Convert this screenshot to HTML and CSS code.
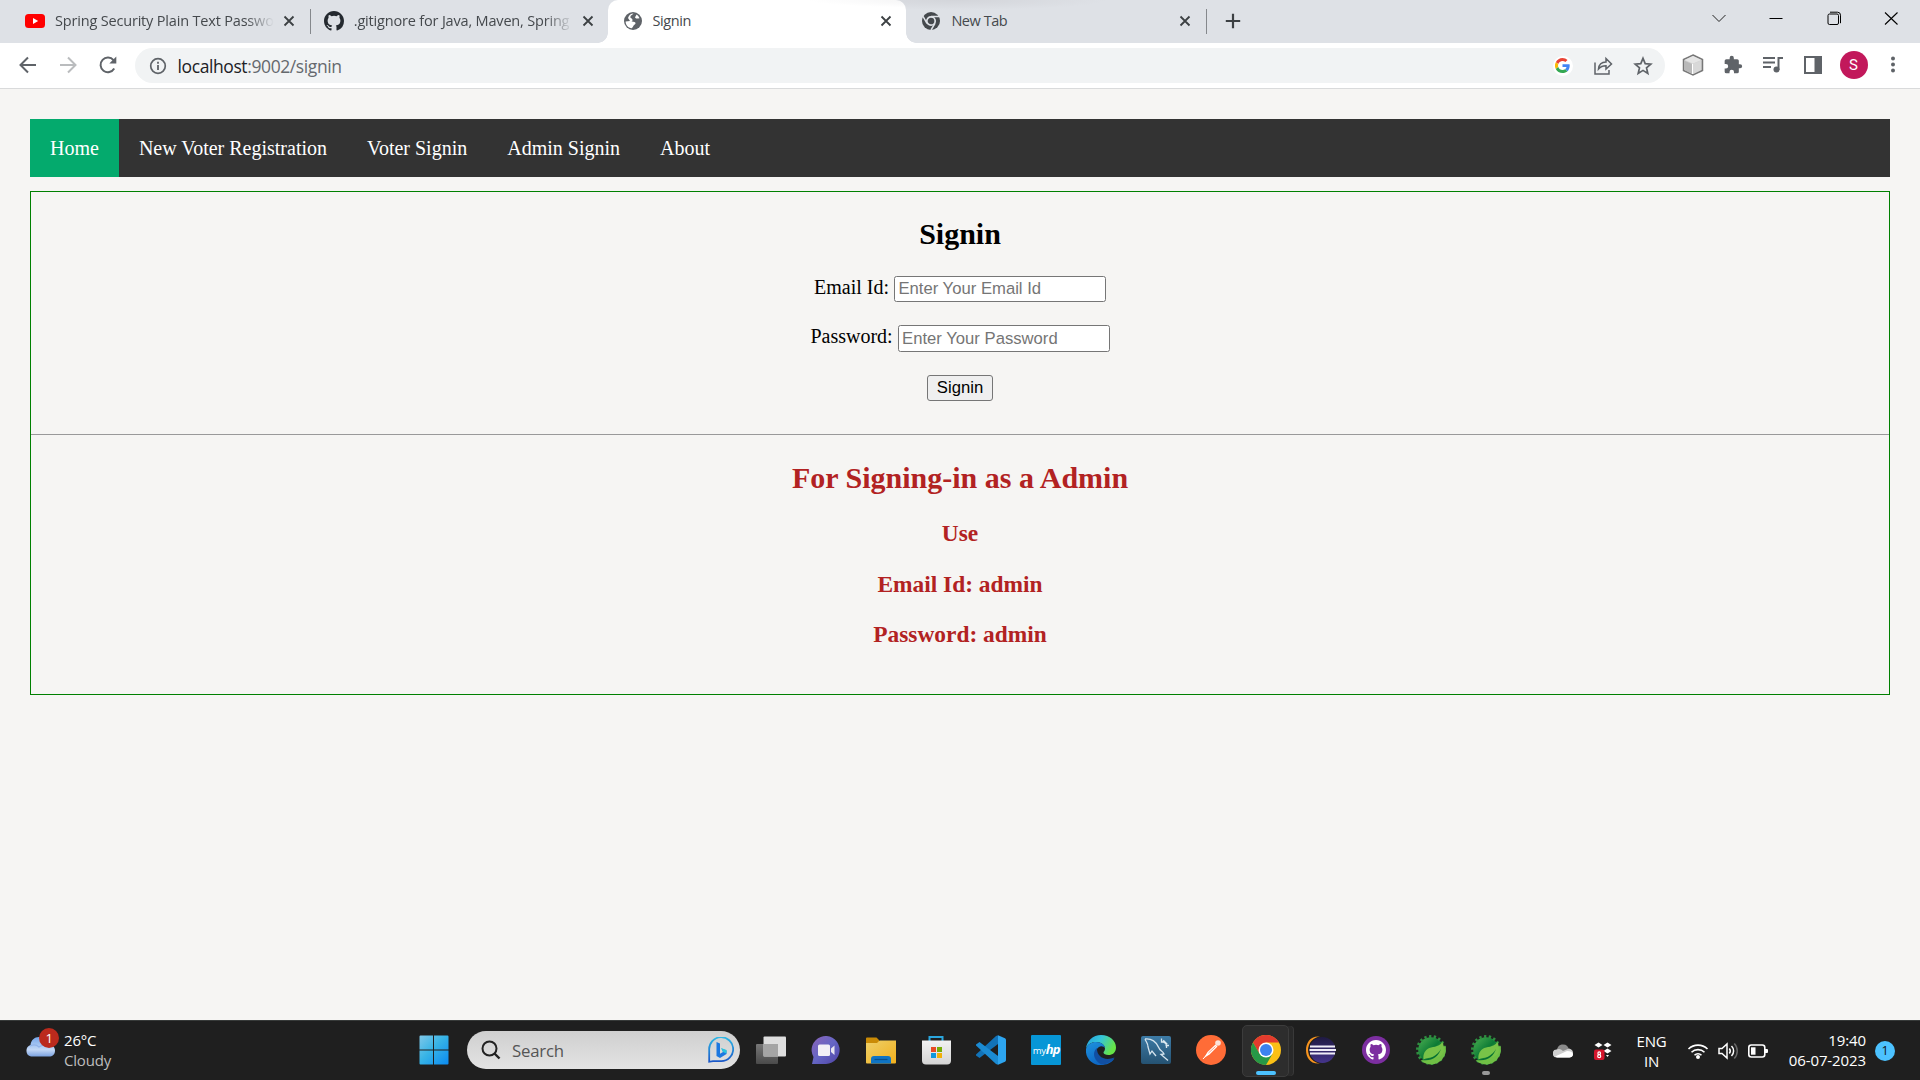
FILE: index.html
```html
<!DOCTYPE html>
<html lang="en">
<head>
<meta charset="utf-8">
<title>Signin</title>
<link rel="stylesheet" href="styles.css">
</head>
<body>
<svg class="defs" width="0" height="0" aria-hidden="true">
  <defs>
    <symbol id="close" viewBox="0 0 12 12"><path d="M1.5 1.5l9 9M10.5 1.5l-9 9" stroke="#3c4043" stroke-width="1.8" fill="none"/></symbol>
    <symbol id="octocat" viewBox="0 0 16 16"><path d="M8 0C3.58 0 0 3.58 0 8c0 3.54 2.29 6.53 5.47 7.59.4.07.55-.17.55-.38 0-.19-.01-.82-.01-1.49-2.01.37-2.53-.49-2.69-.94-.09-.23-.48-.94-.82-1.13-.28-.15-.68-.52-.01-.53.63-.01 1.08.58 1.23.82.72 1.21 1.87.87 2.33.66.07-.52.28-.87.51-1.07-1.78-.2-3.64-.89-3.64-3.95 0-.87.31-1.59.82-2.15-.08-.2-.36-1.02.08-2.12 0 0 .67-.21 2.2.82a7.6 7.6 0 0 1 4 0c1.53-1.04 2.2-.82 2.2-.82.44 1.1.16 1.92.08 2.12.51.56.82 1.27.82 2.15 0 3.07-1.87 3.75-3.65 3.95.29.25.54.73.54 1.48 0 1.07-.01 1.93-.01 2.2 0 .21.15.46.55.38A8.01 8.01 0 0 0 16 8c0-4.42-3.58-8-8-8z"/></symbol>
    <linearGradient id="gSpring" x1="0" y1="0" x2="1" y2="1"><stop offset="0" stop-color="#4db052"/><stop offset=".5" stop-color="#0c7a35"/><stop offset="1" stop-color="#5fb346"/></linearGradient>
    <symbol id="spring" viewBox="0 0 30 30">
      <circle cx="15" cy="15" r="12.8" fill="url(#gSpring)"/>
      <circle cx="15" cy="15" r="13.5" fill="none" stroke="#2f8f40" stroke-width="3" stroke-dasharray="2.3 2.41"/>
      <path d="M29.500 11a15 15 0 0 1-25 14.200C15 25.500 24 20 26.500 12z" fill="#70bf45"/>
      <path d="M26.500 7c3 8 2 15-8 15.500-5 0-8 .5-11 2-.5-4 .5-8 4-10.500C16 11 22 13 26.500 7z" fill="#78c348"/>
      <path d="M6 25c8-1 15-4 19-11-3 8-9 12.500-19 11z" fill="#067033"/>
    </symbol>
    <linearGradient id="gWin" x1="0" y1="0" x2="1" y2="1"><stop offset="0" stop-color="#80c8e8"/><stop offset=".45" stop-color="#38b4e6"/><stop offset="1" stop-color="#0a8af0"/></linearGradient>
    <linearGradient id="gCloud" x1="0" y1="0" x2="0" y2="1"><stop offset="0" stop-color="#76a7ea"/><stop offset=".65" stop-color="#c3d8f6"/><stop offset="1" stop-color="#7ba2e0"/></linearGradient>
    <linearGradient id="gChat" x1="0" y1="0" x2="1" y2="1"><stop offset="0" stop-color="#8b63b8"/><stop offset=".5" stop-color="#6566c4"/><stop offset="1" stop-color="#4f42a4"/></linearGradient>
    <linearGradient id="gFold" x1="0" y1="0" x2="1" y2="1"><stop offset="0" stop-color="#eed06a"/><stop offset="1" stop-color="#f2b01c"/></linearGradient>
    <linearGradient id="gBing" x1="0" y1="0" x2="0" y2="1"><stop offset="0" stop-color="#2bb8e6"/><stop offset="1" stop-color="#1a57c8"/></linearGradient>
    <linearGradient id="gEdge" x1="0" y1="0" x2="1" y2=".4"><stop offset="0" stop-color="#239fe0"/><stop offset=".5" stop-color="#36c6d8"/><stop offset="1" stop-color="#66e448"/></linearGradient>
    <linearGradient id="gEdgeB" x1="0" y1="0" x2=".6" y2="1"><stop offset="0" stop-color="#1e92de"/><stop offset="1" stop-color="#0c62c0"/></linearGradient>
    <linearGradient id="gSql" x1="0" y1="0" x2="0" y2="1"><stop offset="0" stop-color="#3d7ba6"/><stop offset="1" stop-color="#255272"/></linearGradient>
    <linearGradient id="gEcl" x1="0" y1="0" x2="0" y2="1"><stop offset="0" stop-color="#1f1a42"/><stop offset="1" stop-color="#45358c"/></linearGradient>
    <linearGradient id="gStore" x1="0" y1="0" x2="0" y2="1"><stop offset="0" stop-color="#f2f2f2"/><stop offset="1" stop-color="#d4d4d4"/></linearGradient>
    <linearGradient id="gBack" x1="0" y1="0" x2="0" y2="1"><stop offset="0" stop-color="#777"/><stop offset="1" stop-color="#4a4a4a"/></linearGradient>
  </defs>
</svg>

<header class="browser">
  <div class="tabstrip">
    <div class="tab">
      <svg class="favicon" viewBox="0 0 20 20"><rect y="3" width="20" height="14" rx="3.500" fill="#f00"/><path d="M8 7l5.200 3L8 13z" fill="#fff"/></svg>
      <span class="tab-title faded">Spring Security Plain Text Passwo</span>
      <svg class="tab-close"><use href="#close"/></svg>
    </div>
    <div class="tab divided">
      <svg class="favicon" fill="#24292f"><use href="#octocat"/></svg>
      <span class="tab-title faded">.gitignore for Java, Maven, Spring</span>
      <svg class="tab-close"><use href="#close"/></svg>
    </div>
    <div class="tab active">
      <svg class="favicon" viewBox="0 0 20 20"><circle cx="10" cy="10" r="9" fill="#5f6368"/><path d="M10.500 2.600c-.5 1.300-3 1.500-3.200 3.500-.1 1.500 1.900 1.200 2.200 2.700.2 1-.5 1.500-1.500 1.500l3.500.7c1.500.4 1.200 2.200.2 2.600-1.500.6-1.500 2.700-2.900 3.600C5 17 2.600 14 2.600 10.500L7 10l-2-3C6 4 8 2.600 10.500 2.600zM13.500 3.400c-.2 1.500-2.200 2.500-1 3.700 1 1 2.200.2 4 .2-.6-1.800-1.600-3-3-3.900z" fill="#fff"/></svg>
      <span class="tab-title">Signin</span>
      <svg class="tab-close"><use href="#close"/></svg>
    </div>
    <div class="tab">
      <svg class="favicon" viewBox="0 0 20 20"><circle cx="10" cy="10" r="9" fill="#45494d"/><circle cx="10" cy="10" r="4.200" fill="#45494d" stroke="#dee1e6" stroke-width="1.700"/><path d="M10 5.400h8M6 12.300L2 5.400M14 12.300L10 19" stroke="#dee1e6" stroke-width="1.500"/></svg>
      <span class="tab-title">New Tab</span>
      <svg class="tab-close"><use href="#close"/></svg>
    </div>
    <div class="new-tab divided"><svg width="16" height="16" viewBox="0 0 16 16"><path d="M8 .8v14.400M.8 8h14.400" stroke="#3c4043" stroke-width="2.200"/></svg></div>
    <div class="window-controls">
      <svg viewBox="0 0 16 16"><path d="M1.500 5L8 11.500 14.500 5" fill="none" stroke="#222"/></svg>
      <svg viewBox="0 0 16 16"><path d="M1.500 8.500h13" stroke="#000"/></svg>
      <svg viewBox="0 0 16 16"><rect x="2" y="4" width="10.500" height="10.500" rx="1.500" fill="none" stroke="#000"/><path d="M4 2.200h7.500a3 3 0 0 1 3 3v8" fill="none" stroke="#000"/></svg>
      <svg viewBox="0 0 16 16"><path d="M2 2.500l12.500 12M14.500 2.500l-12.500 12" stroke="#000" stroke-width="1.100"/></svg>
    </div>
  </div>

  <div class="toolbar">
    <div class="nav-buttons">
      <svg viewBox="0 0 20 20"><path d="M18 10H3M10 2.500L2.500 10l7.500 7.500" fill="none" stroke="#5f6368" stroke-width="2"/></svg>
      <svg viewBox="0 0 20 20"><path d="M2 10h15M10 2.500l7.500 7.500-7.500 7.500" fill="none" stroke="#babcbe" stroke-width="2"/></svg>
      <svg viewBox="0 0 20 20"><path d="M16.200 13.500A7.300 7.300 0 1 1 15.500 5.200l1 1.200" fill="none" stroke="#5f6368" stroke-width="2"/><path d="M18.300 1.500v7h-7z" fill="#5f6368"/></svg>
    </div>
    <div class="omnibox">
      <svg class="info" viewBox="0 0 18 18"><circle cx="9" cy="9" r="7.300" fill="none" stroke="#5f6368" stroke-width="1.700"/><path d="M9 8v5M9 4.800v1.900" stroke="#5f6368" stroke-width="1.800"/></svg>
      <span class="url"><span class="host">localhost</span>:9002/signin</span>
      <div class="omni-actions">
        <span class="google"><svg width="15" height="15" viewBox="0 0 48 48"><path fill="#ea4335" d="M24 9.500c3.500 0 6.700 1.200 9.200 3.600l6.900-6.900C35.900 2.400 30.500 0 24 0 14.600 0 6.500 5.400 2.600 13.200l8 6.200C12.400 13.700 17.700 9.500 24 9.500z"/><path fill="#4285f4" d="M47 24.600c0-1.600-.2-3.100-.4-4.600H24v9h12.900c-.6 3-2.300 5.500-4.800 7.200l7.700 6C44.400 38 47 31.800 47 24.600z"/><path fill="#fbbc05" d="M10.500 28.600a14.500 14.500 0 0 1 0-9.200l-8-6.200a24 24 0 0 0 0 21.600z"/><path fill="#34a853" d="M24 48c6.500 0 12-2.100 15.900-5.800l-7.700-6c-2.200 1.500-4.900 2.300-8.200 2.300-6.300 0-11.600-4.200-13.500-9.900l-8 6.200C6.500 42.600 14.600 48 24 48z"/></svg></span>
        <svg viewBox="0 0 20 20"><path d="M2 6.500V18h14v-4M5.500 13c.5-5 3.500-7 7.500-7V2.500L18.500 8 13 13V9.800c-3 0-5.500.8-7.500 3.200z" fill="none" stroke="#5f6368" stroke-width="1.500"/></svg>
        <svg viewBox="0 0 20 20"><path d="M10 2.300l2.200 5.300 5.600.5-4.300 3.700 1.300 5.600L10 14.400l-4.800 3 1.300-5.600-4.300-3.700 5.600-.5z" fill="none" stroke="#5f6368" stroke-width="1.700"/></svg>
      </div>
    </div>
    <div class="extensions">
      <svg viewBox="0 0 22 22"><path d="M11 1l9.500 4.500v11L11 21l-9.500-4.500v-11z" fill="#cfcfcf" stroke="#777" stroke-width="1.500"/><path d="M2.500 6L11 2l8.500 4L11 9.500z" fill="#e5e5e5"/><path d="M10 10v10l-7.500-4V6.800z" fill="#b9b9b9"/><path d="M11 9.800l8-3.300v9.400l-8 4z" fill="#d8d8d8"/><path d="M10.500 9.800V20" stroke="#fff"/></svg>
      <svg viewBox="0 0 24 24"><path d="M20.500 11H19V7a2 2 0 0 0-2-2h-4V3.500a2.500 2.500 0 0 0-5 0V5H4a2 2 0 0 0-2 2v3.800h1.500a2.700 2.700 0 0 1 0 5.400H2V20a2 2 0 0 0 2 2h3.800v-1.500a2.700 2.700 0 0 1 5.400 0V22H17a2 2 0 0 0 2-2v-4h1.500a2.500 2.500 0 0 0 0-5z" fill="#5f6368"/></svg>
      <svg viewBox="0 0 22 22"><path d="M1 4h12M1 8.500h12M1 13h8" stroke="#5f6368" stroke-width="2"/><path d="M16.500 16V4H21" fill="none" stroke="#5f6368" stroke-width="2"/><circle cx="14.500" cy="15.500" r="3" fill="#5f6368"/></svg>
      <svg viewBox="0 0 22 22"><rect x="3" y="3" width="16" height="16" fill="#fff" stroke="#5f6368" stroke-width="2"/><path d="M12.500 3H19v16h-6.500z" fill="#5f6368"/></svg>
      <span class="avatar">S</span>
      <svg viewBox="0 0 22 22" fill="#5f6368"><circle cx="11" cy="4.500" r="2"/><circle cx="11" cy="10.500" r="2"/><circle cx="11" cy="16.500" r="2"/></svg>
    </div>
  </div>
</header>

<main class="page">
  <nav class="menu">
    <a class="current">Home</a>
    <a>New Voter Registration</a>
    <a>Voter Signin</a>
    <a>Admin Signin</a>
    <a>About</a>
  </nav>
  <section class="panel">
    <form class="signin">
      <h2>Signin</h2>
      <div class="field"><label>Email Id:</label><input type="text" placeholder="Enter Your Email Id"></div>
      <div class="field"><label>Password:</label><input type="password" placeholder="Enter Your Password"></div>
      <button type="button">Signin</button>
    </form>
    <div class="hint">
      <h2>For Signing-in as a Admin</h2>
      <h3>Use</h3>
      <h3>Email Id: admin</h3>
      <h3>Password: admin</h3>
    </div>
  </section>
</main>

<footer class="taskbar">
  <div class="weather">
    <div class="weather-icon">
      <svg width="30" height="20" viewBox="0 0 30 20"><path d="M6 19.500a6 6 0 0 1-.5-11.500C6 3 9.500 0 14 0c5 0 8 3 8.500 7.500 4-.5 7.500 2 7.500 6s-2.500 6-6 6z" fill="url(#gCloud)"/><path d="M5 9c4-2 7-1 9 1 3-2 6-3 9-2" fill="none" stroke="#92b4ea" stroke-width="1.200"/></svg>
      <span class="count">1</span>
    </div>
    <div class="weather-text"><span>26°C</span><span class="dim">Cloudy</span></div>
  </div>

  <div class="apps">
    <div class="app"><svg viewBox="0 0 30 30"><path d="M.5 1.500a1 1 0 0 1 1-1H14v14H.500zM15 .500h13.500a1 1 0 0 1 1 1v13H15zM.500 15.500H14v14H1.500a1 1 0 0 1-1-1zM15 15.500h14.500v13a1 1 0 0 1-1 1H15z" fill="url(#gWin)"/></svg></div>
    <div class="search">
      <svg width="20" height="20" viewBox="0 0 20 20"><circle cx="8.500" cy="8.500" r="7" fill="none" stroke="#222" stroke-width="2"/><path d="M13.500 13.500l5 5" stroke="#222" stroke-width="2.400"/></svg>
      <span>Search</span>
      <svg class="bing" width="26" height="26" viewBox="0 0 26 26"><path d="M1.200 24.800V13A12 12 0 1 1 13 24.200H5z" fill="none" stroke="url(#gBing)" stroke-width="1.800"/><path d="M8.500 5l3.500 1.500v10.200l3-1.700-1.500-3.500 5 2v3.500L12 21l-3.500-2z" fill="#1d78e0"/><path d="M13 11l5.500 2v3.500L15 15z" fill="#2cc4dd"/></svg>
    </div>
    <div class="app"><svg viewBox="0 0 30 30"><rect y="9" width="22" height="20" rx="1" fill="url(#gBack)"/><rect x="7.500" y="1.500" width="22.500" height="20" rx="1" fill="#dedede"/><path d="M7.500 9H22v12.500H7.500z" fill="#a5a5a5"/></svg></div>
    <div class="app"><svg viewBox="0 0 30 30"><path d="M1 29l1.500-7A14 14 0 1 1 15 29z" fill="url(#gChat)"/><rect x="7" y="9.500" width="12" height="11.500" rx="1.500" fill="#f2f0f6"/><path d="M20 13.500l3.500-3v9.500L20 17z" fill="#e8e6f0"/></svg></div>
    <div class="app"><svg viewBox="0 0 30 30"><path d="M0 3.500a1 1 0 0 1 1-1h9.500L13 5v4H0z" fill="#ca8b06"/><path d="M0 8h11l2.500-2.500H30V27.500a1 1 0 0 1-1 1H1a1 1 0 0 1-1-1z" fill="url(#gFold)"/><path d="M5 28.500V24a3 3 0 0 1 3-3h14a3 3 0 0 1 3 3v4.500z" fill="#0f74c4"/><path d="M8.500 24.500h13" stroke="#07508f" stroke-width="1.200"/></svg></div>
    <div class="app"><svg viewBox="0 0 30 30"><path d="M8.500 6.500V2h13v4.500" fill="none" stroke="#2aa6dd" stroke-width="2"/><path d="M1 5.500h29v20a4 4 0 0 1-4 4H5a4 4 0 0 1-4-4z" fill="url(#gStore)"/><path d="M10 12h5v5h-5z" fill="#e74b25"/><path d="M16 12h5v5h-5z" fill="#76ad07"/><path d="M10 18h5v5h-5z" fill="#0e97dc"/><path d="M16 18h5v5h-5z" fill="#f1b007"/></svg></div>
    <div class="app"><svg viewBox="0 0 30 30"><path d="M22 9L3.500 23 0 20.500v-1L20 1l2-.8z" fill="#1273b8"/><path d="M22 21L3.500 7 0 9.500v1L20 29l2 .8z" fill="#1b8bd3"/><path d="M22 .2l7 3a2 2 0 0 1 1 1.700v20.200a2 2 0 0 1-1 1.700l-7 3z" fill="#2da5f0"/></svg></div>
    <div class="app"><span class="myhp">my<b>hp</b></span></div>
    <div class="app"><svg viewBox="0 0 30 30"><path d="M15 0c9 0 15 6 15 12.500 0 5-3.500 7.500-7.500 7.500-3 0-5-1-5-2.500 0-1 1.500-1.300 1.500-4C19 10 15.500 7 10 7 5 7 1 10 0 14 .5 6 7 0 15 0z" fill="url(#gEdge)"/><path d="M0 14C1.500 9 6 7 10 7c5.500 0 9 3 9 6.500-.5-2-4-3-6-1.500-6 4-2 14 7 14 4 0 6-1 8.500-2.500C25.500 28 20 30 15 30 6 30-1 23 0 14z" fill="url(#gEdgeB)"/><path d="M11 13c-6 5-2 14 5 16.500 6-.5 10-3 12.500-7-10 4-18-1-17.500-9.500z" fill="#114fa2"/></svg></div>
    <div class="app"><svg viewBox="0 0 30 30"><rect y="1" width="30" height="28" rx="2" fill="url(#gSql)"/><path d="M4 4c6-1 12 3 14 9 1 3 4 3 5 6l-3 .5 7 6M4 4c1 3 3 4 3 8l2 7 2-3 4 5" fill="none" stroke="#d5e4ee" stroke-width="1.300"/><path d="M22 5.500l4 4" stroke="#dce8ef" stroke-width="2"/><path d="M20.500 3.500v3.500h3.500M24.500 10.500H28M25.500 9.500v3.500" fill="none" stroke="#dce8ef" stroke-width="1.300"/></svg></div>
    <div class="app"><svg viewBox="0 0 30 30"><circle cx="15" cy="15" r="15" fill="#ff6c37"/><circle cx="22" cy="8" r="2.800" fill="#fbe3da"/><path d="M19.500 9.500l2 2-8 8L8 23l3.500-6z" fill="#fff"/><path d="M7 24l4.500-5" stroke="#fff"/><path d="M12.500 18l7-6.500" stroke="#ff9d7b"/></svg></div>
    <div class="app running focused"><svg viewBox="0 0 30 30"><circle cx="15" cy="15" r="15" fill="#fbc016"/><path d="M15 7.500H28A15 15 0 0 0 2 7.500L8.500 19z" fill="#e33b2e"/><path d="M2 7.500A15 15 0 0 0 15 30l6.500-11.200L8.500 18.800z" fill="#279847"/><circle cx="15" cy="15" r="7.500" fill="#fff"/><circle cx="15" cy="15" r="6" fill="#3c82f0"/></svg></div>
    <div class="app"><svg viewBox="0 0 30 30"><path d="M14 1.500A13.600 13.600 0 0 0 14 28.500C4 29.500 0 22 0 15S4 .500 14 1.500z" fill="#f7941e"/><circle cx="16.500" cy="15" r="13" fill="url(#gEcl)"/><path d="M4 11.500h25M3.500 15h26.500M4 18.500h25" stroke="#f0eef8" stroke-width="1.900"/></svg></div>
    <div class="app"><svg viewBox="0 0 30 30"><circle cx="15" cy="15" r="14" fill="#7c2ea0"/><svg x="5" y="5" width="20" height="20" fill="#fff"><use href="#octocat"/></svg></svg></div>
    <div class="app"><svg><use href="#spring"/></svg></div>
    <div class="app running"><svg><use href="#spring"/></svg></div>
  </div>

  <div class="tray">
    <svg class="cloud" width="20" height="14" viewBox="0 0 20 14"><path d="M3 9C4 3 6 .5 10 .5c3.500 0 5.500 2 6 5.500z" fill="#8b8b8b"/><path d="M4 13.500a4 4 0 0 1-.5-8C7 4 9 6 10 7l6-2.500c3 .5 4 2.500 4 4.500s-1 4.500-4 4.500z" fill="#cfcfcf"/><path d="M2 12.500L14 7c4 0 6 1.500 6 3.500s-1.500 3-4 3H4z" fill="#fff"/></svg>
    <svg class="dropbox" width="20" height="20" viewBox="0 0 20 20"><path d="M5.500 1.500l4 2.500-4 2.500L1.500 4zM14.500 1.500l4 2.500-4 2.500-4-2.500zM14.500 7.500l4 2.500-4 2.500-4-2.500zM13 14h3l-1.500 2z" fill="#fff"/><rect x="1" y="8.500" width="10.500" height="10.500" rx="2" fill="#d5152c"/><circle cx="6.200" cy="12.200" r="1.300" fill="none" stroke="#fff" stroke-width="1.200"/><circle cx="6.200" cy="15.200" r="1.500" fill="none" stroke="#fff" stroke-width="1.200"/></svg>
    <div class="lang"><span>ENG</span><span>IN</span></div>
    <div class="status">
      <svg width="22" height="18" viewBox="0 0 22 18"><path d="M1.500 7a13.500 13.500 0 0 1 19 0M4.500 10.300a9.200 9.200 0 0 1 13 0M7.500 13.300a5 5 0 0 1 7 0" fill="none" stroke="#fff" stroke-width="1.600"/><circle cx="11" cy="15" r="2" fill="#fff"/></svg>
      <svg width="22" height="18" viewBox="0 0 22 18"><path d="M2 6.500h3l5-4.500v14l-5-4.500H2z" fill="none" stroke="#fff" stroke-width="1.500"/><path d="M12.300 6.500a4 4 0 0 1 0 5M14.500 4a7 7 0 0 1 0 10" fill="none" stroke="#fff" stroke-width="1.500"/><path d="M17.300 1.500a11 11 0 0 1 0 15" fill="none" stroke="#686868" stroke-width="1.500"/></svg>
      <svg width="22" height="18" viewBox="0 0 22 18"><rect x="1.800" y="3" width="16" height="12" rx="2.500" fill="none" stroke="#fff" stroke-width="1.600"/><rect x="4" y="5.300" width="4.500" height="7.400" fill="#fff"/><path d="M18 7h2a1 1 0 0 1 1 1v2a1 1 0 0 1-1 1h-2z" fill="#fff"/></svg>
    </div>
    <div class="clock"><span>19:40</span><span>06-07-2023</span></div>
    <span class="notify">1</span>
  </div>
</footer>
</body>
</html>
```
FILE: styles.css
```css
* { box-sizing: border-box; }

body {
  margin: 0;
  width: 1920px;
  height: 1080px;
  overflow: hidden;
  display: flex;
  flex-direction: column;
  background: #f6f5f3;
  font-family: "Liberation Serif", serif;
}

svg { display: block; flex: none; }
.defs { position: absolute; }

/* Browser chrome */
.browser {
  flex: none;
  height: 89px;
  background: #fff;
  border-bottom: 1px solid #d9dadb;
  font-family: "Open Sans", "Noto Sans", sans-serif;
}

.tabstrip {
  height: 43px;
  display: flex;
  align-items: stretch;
  padding-left: 10px;
  background: radial-gradient(ellipse 150px 10px at 957px 0, #d3d5da, #dee1e6);
}

.tab {
  width: 298.800px;
  display: flex;
  align-items: center;
  padding: 0 14px 2px 15px;
  color: #45494d;
}

.favicon { width: 20px; height: 20px; margin-right: 10px; }

.tab-title {
  flex: 1;
  overflow: hidden;
  white-space: nowrap;
  font-size: 14.500px;
  letter-spacing: -0.450px;
}

.faded {
  flex: 0 0 219px;
  margin-right: 9px;
  letter-spacing: -0.180px;
  -webkit-mask-image: linear-gradient(90deg, #000 87%, transparent);
  mask-image: linear-gradient(90deg, #000 87%, transparent);
}

.tab-close { width: 12px; height: 12px; }

.divided {
  background: linear-gradient(#85888c, #85888c) 1px 9px / 1px 25px no-repeat;
}

.active {
  position: relative;
  background: radial-gradient(ellipse 150px 8px at 350px 0, #f1f1f2, #fff);
  border-radius: 10px 10px 0 0;
}

.active::before,
.active::after {
  content: "";
  position: absolute;
  bottom: 0;
  width: 10px;
  height: 10px;
}
.active::before { left: -10px; background: radial-gradient(circle at 0 0, transparent 9.500px, #fff 10px); }
.active::after { right: -10px; background: radial-gradient(circle at 100% 0, transparent 9.500px, #fff 10px); }

.new-tab { padding: 13px 0 0 20px; }

.window-controls {
  margin-left: auto;
  padding: 10px 21px 0 0;
  display: flex;
  gap: 41.400px;
}
.window-controls svg { width: 16px; height: 16px; }

.toolbar {
  height: 44px;
  display: flex;
  align-items: center;
  padding-top: 1px;
}

.nav-buttons {
  width: 135px;
  display: flex;
  gap: 20px;
  padding: 0 0 1px 17.500px;
}
.nav-buttons svg { width: 20px; height: 20px; }

.omnibox {
  width: 1530px;
  height: 35px;
  border-radius: 18px;
  background: #f1f3f4;
  display: flex;
  align-items: center;
  padding: 0 12.500px 0 13.500px;
}
.info { width: 18px; height: 18px; margin-right: 11px; }
.url { font-size: 17.500px; letter-spacing: -0.400px; color: #65696e; }
.host { color: #202124; }

.omni-actions {
  margin-left: auto;
  display: flex;
  align-items: center;
  gap: 20px;
}
.omni-actions svg { width: 20px; height: 20px; }
.google {
  width: 20px;
  height: 20px;
  border-radius: 50%;
  background: #fff;
  display: grid;
  place-items: center;
}
.google svg { width: 15px; height: 15px; }

.extensions {
  display: flex;
  align-items: center;
  gap: 18px;
  padding: 0 0 1px 16.500px;
}
.extensions svg { width: 22px; height: 22px; }
.extensions svg:nth-child(2) { width: 20px; margin: 0 1px; }
.avatar {
  width: 28px;
  height: 28px;
  margin: 0 -4px 0 -2px;
  border-radius: 50%;
  background: #c2185b;
  color: #fff;
  font: 15px/28px Roboto, sans-serif;
  text-align: center;
}

/* Web page */
.page {
  flex: 1;
  padding: 30px 30px 0;
}

.menu {
  height: 58px;
  display: flex;
  background: #333;
}
.menu a {
  padding: 0 20px;
  color: #fff;
  font-size: 20px;
  line-height: 59px;
}
.menu .current { background: #04aa6d; }

.panel {
  height: 504px;
  margin-top: 14px;
  border: 1px solid green;
  text-align: center;
}

h2, h3 { margin: 0; }
h2 { font-size: 30px; line-height: 34px; }

.signin {
  height: 243px;
  padding-top: 25px;
  border-bottom: 1px solid #999;
  display: flex;
  flex-direction: column;
  align-items: center;
}
.signin h2 { margin-bottom: 25px; }

.field {
  height: 26px;
  margin-bottom: 23px;
  display: flex;
  align-items: flex-start;
  gap: 5px;
}
.field + .field { height: 27px; }
.field label { font-size: 20px; line-height: 23px; }
.field input {
  width: 212px;
  height: 100%;
  padding: 1px 3.500px;
  border: 1px solid #767676;
  border-radius: 2.500px;
  background: #fff;
  font: 16.660px "Liberation Sans", sans-serif;
}
.field input::placeholder { color: #757575; }

.signin button {
  width: 66px;
  height: 26px;
  padding: 0;
  border: 1px solid #767676;
  border-radius: 3px;
  background: #efefef;
  color: #000;
  font: 16.660px "Liberation Sans", sans-serif;
}

.hint {
  padding-top: 26px;
  color: #b22222;
}
.hint h3 { font-size: 23.400px; line-height: 27px; margin-top: 23.700px; }
.hint h2 + h3 { margin-top: 25px; }

/* Taskbar */
.taskbar {
  flex: none;
  height: 60px;
  display: flex;
  border-top: 1px solid #373a39;
  background: #1f1f1f;
  color: #fff;
  font-family: "Open Sans", "Noto Sans", sans-serif;
  font-size: 15px;
  letter-spacing: -0.200px;
}

.weather {
  width: 406.500px;
  display: flex;
  padding-left: 25px;
}
.weather-icon { position: relative; width: 39px; padding-top: 16px; }
.count {
  position: absolute;
  left: 14px;
  top: 7px;
  width: 20px;
  height: 20px;
  border-radius: 50%;
  background: #bb2a1d;
  font-size: 13px;
  line-height: 20px;
  text-align: center;
}
.weather-text {
  display: flex;
  flex-direction: column;
  line-height: 20px;
  padding-top: 9px;
}
.dim { color: #bdbdbd; }

.apps { display: flex; align-items: center; padding-bottom: 1px; }
.app {
  position: relative;
  width: 55px;
  height: 50px;
  display: flex;
  align-items: center;
  justify-content: center;
}
.app > svg { width: 30px; height: 30px; }

.search {
  width: 273px;
  height: 38px;
  margin: 0 3.500px 0 5.500px;
  padding: 0 6px 0 14px;
  border-radius: 19px;
  background: linear-gradient(#cfcfcf, #e3e3e3);
  color: #555;
  display: flex;
  align-items: center;
  font-size: 16.800px;
}
.search span { margin-left: 11px; }
.bing { margin-left: auto; }

.myhp {
  width: 30px;
  height: 30px;
  border-radius: 1px;
  background: #0796d6;
  font-size: 9.500px;
  line-height: 29px;
  text-align: center;
}
.myhp b { font-size: 13px; font-style: italic; letter-spacing: -1px; }

.running::after {
  content: "";
  position: absolute;
  bottom: 0;
  width: 8px;
  height: 4px;
  border-radius: 2px;
  background: #999;
}
.focused { z-index: 0; }
.focused::after { width: 20px; background: #4cc2ff; }
.focused::before {
  content: "";
  position: absolute;
  z-index: -1;
  left: 3px;
  top: 0;
  width: 45px;
  height: 50px;
  border: 1px solid #3c3c3c;
  border-radius: 5px;
  background: #2d2d2d;
  box-shadow: 5px 0 0 -1px #292929, 6px 0 0 -1px #393939;
}

.tray { margin-left: auto; display: flex; align-items: center; }
.cloud { margin-right: 20px; }
.dropbox { margin-right: 23px; }
.lang, .clock { display: flex; flex-direction: column; line-height: 20px; }
.lang { width: 31px; text-align: center; margin-right: 20px; white-space: nowrap; }
.status { display: flex; gap: 8px; width: 82px; margin-right: 17px; }
.clock { width: 80px; text-align: right; padding-bottom: 1px; white-space: nowrap; letter-spacing: -0.100px; }
.notify {
  width: 20px;
  height: 20px;
  margin: 0 25px 0 9px;
  border-radius: 50%;
  background: #4cc2ff;
  color: #111;
  font-size: 12.500px;
  line-height: 20px;
  text-align: center;
}
```
